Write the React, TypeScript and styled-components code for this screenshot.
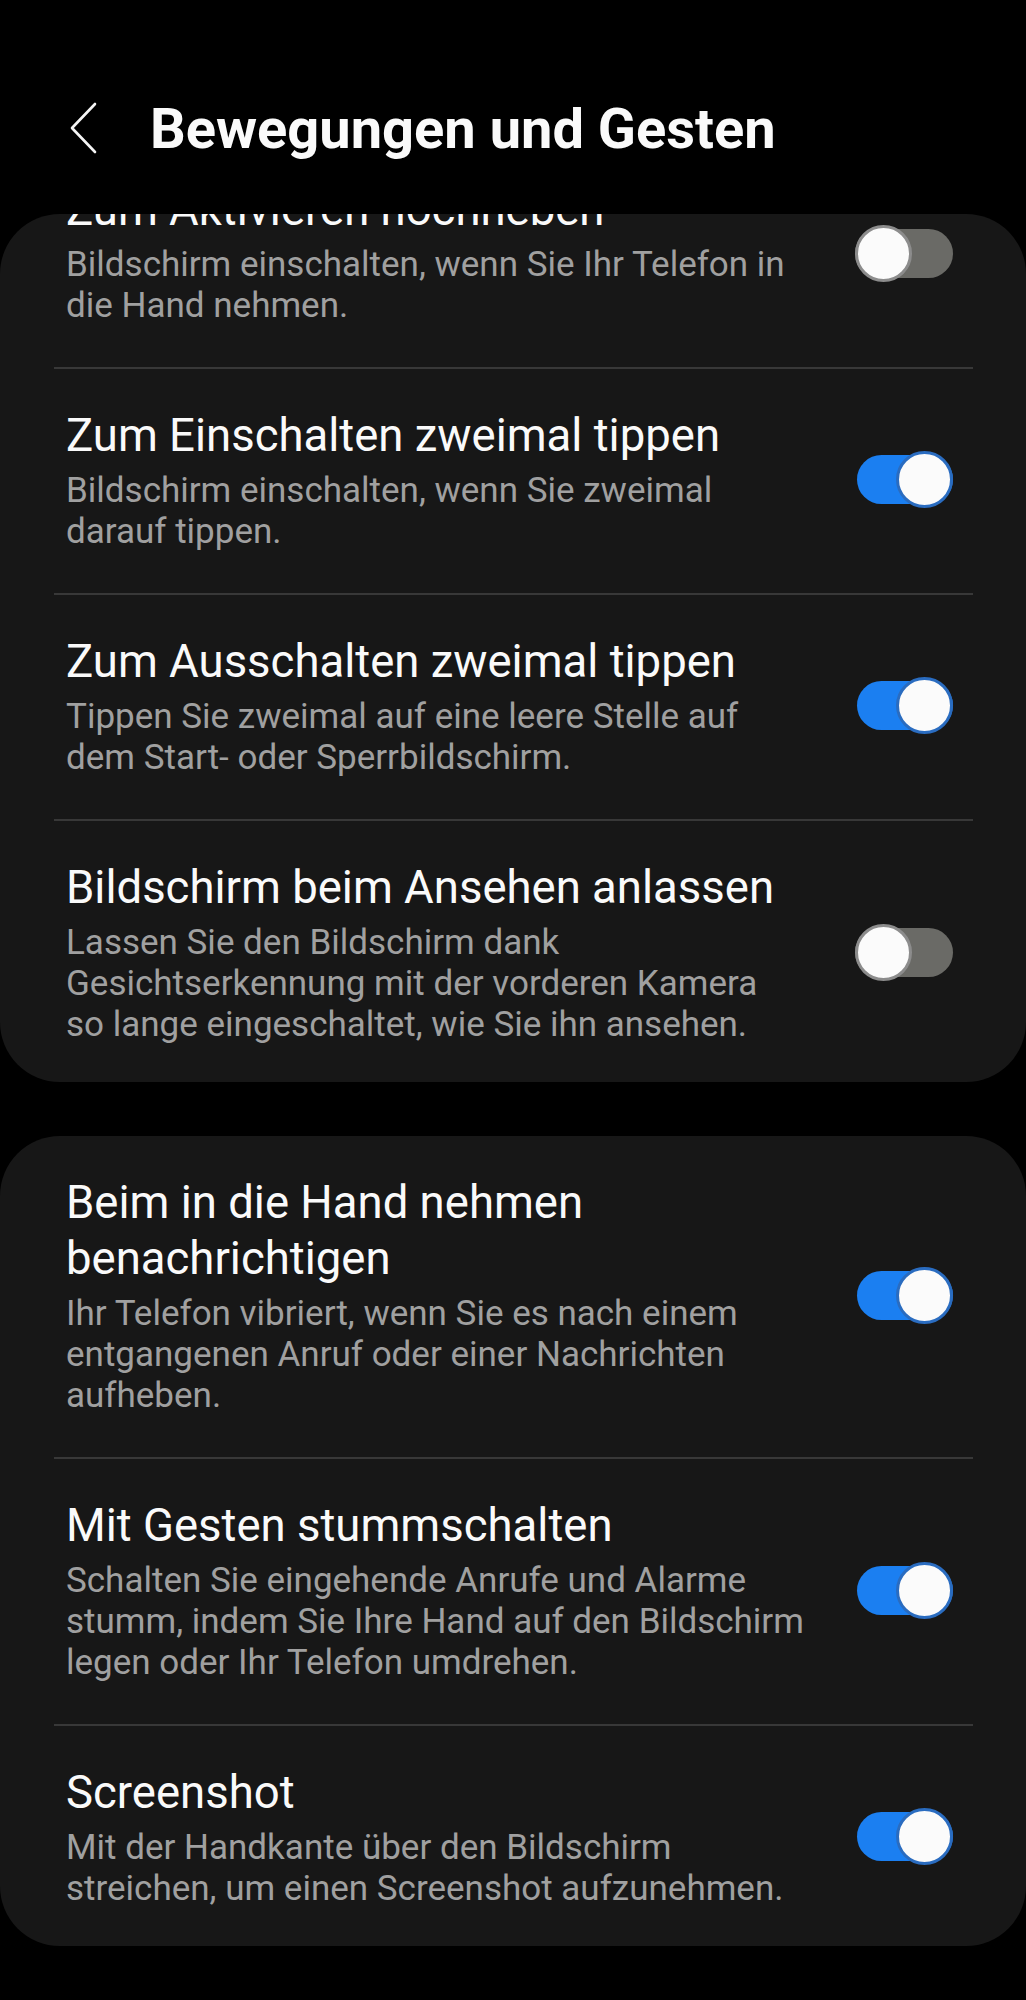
import React from "react";
import styled, { createGlobalStyle } from "styled-components";

const Global = createGlobalStyle`
  html, body {
    margin: 0;
    padding: 0;
    background: #000;
  }
  body {
    font-family: Roboto, "Noto Sans", "Liberation Sans", sans-serif;
    -webkit-font-smoothing: antialiased;
  }
`;

const Page = styled.div`
  width: 1026px;
  min-height: 2000px;
  background: #000;
  display: flex;
  flex-direction: column;
`;

const Header = styled.header`
  box-sizing: border-box;
  height: 214px;
  padding: 97px 0 0 70px;
  display: flex;
  align-items: flex-start;
  gap: 52px;
`;

const BackButton = styled.button`
  background: none;
  border: 0;
  padding: 0;
  margin-top: 5px;
  width: 28px;
  height: 52px;
  display: flex;
  cursor: pointer;
`;

const Title = styled.h1`
  margin: 0;
  font-family: Roboto, "Noto Sans", sans-serif;
  font-weight: 700;
  font-size: 56px;
  line-height: 64px;
  color: #fafafa;
  letter-spacing: 0;
`;

const Card = styled.section<{ $gapTop?: number }>`
  background: #171717;
  border-radius: 60px;
  overflow: hidden;
  margin-top: ${(p) => p.$gapTop ?? 0}px;
  display: flex;
  flex-direction: column;
`;

const Row = styled.div<{ $clip?: number }>`
  display: flex;
  align-items: center;
  gap: 40px;
  padding: 39px 73px 41px 66px;
  margin-top: ${(p) => (p.$clip ? -p.$clip : 0)}px;
  &:last-child {
    padding-bottom: 37px;
  }
`;

const TextCol = styled.div`
  flex: 1;
  min-width: 0;
  display: flex;
  flex-direction: column;
`;

const ItemTitle = styled.div`
  font-size: 45.5px;
  line-height: 56px;
  color: #fafafa;
  font-weight: 400;
`;

const ItemDesc = styled.div`
  margin-top: 6px;
  font-size: 35px;
  line-height: 41px;
  color: #a0a0a0;
  font-weight: 400;
`;

const Divider = styled.div`
  height: 2px;
  margin: 0 53px 0 54px;
  background: #383838;
`;

const Switch = styled.div<{ $on: boolean }>`
  position: relative;
  flex: none;
  width: 98px;
  height: 58px;
`;

const Track = styled.div<{ $on: boolean }>`
  position: absolute;
  left: ${(p) => (p.$on ? 2 : 0)}px;
  right: 0;
  top: 4px;
  height: 49px;
  border-radius: 25px;
  background: ${(p) => (p.$on ? "#1b7ff1" : "#6a6a66")};
`;

const Thumb = styled.div<{ $on: boolean }>`
  position: absolute;
  top: 0;
  ${(p) => (p.$on ? "right: 0;" : "left: 0;")}
  box-sizing: border-box;
  width: 57px;
  height: 57px;
  border-radius: 50%;
  background: #fbfbfb;
  border: 3px solid ${(p) => (p.$on ? "#2a6cc0" : "#8c8c8c")};
`;

type Item = {
  title: string[];
  desc: string[];
  on: boolean;
  clip?: number;
};

const card1: Item[] = [
  {
    title: ["Zum Aktivieren hochheben"],
    desc: ["Bildschirm einschalten, wenn Sie Ihr Telefon in", "die Hand nehmen."],
    on: false,
    clip: 71,
  },
  {
    title: ["Zum Einschalten zweimal tippen"],
    desc: ["Bildschirm einschalten, wenn Sie zweimal", "darauf tippen."],
    on: true,
  },
  {
    title: ["Zum Ausschalten zweimal tippen"],
    desc: ["Tippen Sie zweimal auf eine leere Stelle auf", "dem Start- oder Sperrbildschirm."],
    on: true,
  },
  {
    title: ["Bildschirm beim Ansehen anlassen"],
    desc: [
      "Lassen Sie den Bildschirm dank",
      "Gesichtserkennung mit der vorderen Kamera",
      "so lange eingeschaltet, wie Sie ihn ansehen.",
    ],
    on: false,
  },
];

const card2: Item[] = [
  {
    title: ["Beim in die Hand nehmen", "benachrichtigen"],
    desc: [
      "Ihr Telefon vibriert, wenn Sie es nach einem",
      "entgangenen Anruf oder einer Nachrichten",
      "aufheben.",
    ],
    on: true,
  },
  {
    title: ["Mit Gesten stummschalten"],
    desc: [
      "Schalten Sie eingehende Anrufe und Alarme",
      "stumm, indem Sie Ihre Hand auf den Bildschirm",
      "legen oder Ihr Telefon umdrehen.",
    ],
    on: true,
  },
  {
    title: ["Screenshot"],
    desc: ["Mit der Handkante über den Bildschirm", "streichen, um einen Screenshot aufzunehmen."],
    on: true,
  },
];

const Lines = ({ lines }: { lines: string[] }) => (
  <>
    {lines.map((l, i) => (
      <React.Fragment key={i}>
        {i > 0 && <br />}
        {l}
      </React.Fragment>
    ))}
  </>
);

const Toggle = ({ on }: { on: boolean }) => (
  <Switch $on={on} role="switch" aria-checked={on}>
    <Track $on={on} />
    <Thumb $on={on} />
  </Switch>
);

const SettingsCard = ({ items, gapTop }: { items: Item[]; gapTop?: number }) => (
  <Card $gapTop={gapTop}>
    {items.map((it, i) => (
      <React.Fragment key={i}>
        {i > 0 && <Divider />}
        <Row $clip={it.clip}>
          <TextCol>
            <ItemTitle>
              <Lines lines={it.title} />
            </ItemTitle>
            <ItemDesc>
              <Lines lines={it.desc} />
            </ItemDesc>
          </TextCol>
          <Toggle on={it.on} />
        </Row>
      </React.Fragment>
    ))}
  </Card>
);

export default function App() {
  return (
    <>
      <Global />
      <Page>
        <Header>
          <BackButton aria-label="Zurück">
            <svg width="28" height="52" viewBox="0 0 28 52" fill="none">
              <path
                d="M25 2 L2 26 L25 50"
                stroke="#f5f5f5"
                strokeWidth="2.6"
                strokeLinecap="round"
                strokeLinejoin="round"
              />
            </svg>
          </BackButton>
          <Title>Bewegungen und Gesten</Title>
        </Header>
        <SettingsCard items={card1} />
        <SettingsCard items={card2} gapTop={54} />
      </Page>
    </>
  );
}
